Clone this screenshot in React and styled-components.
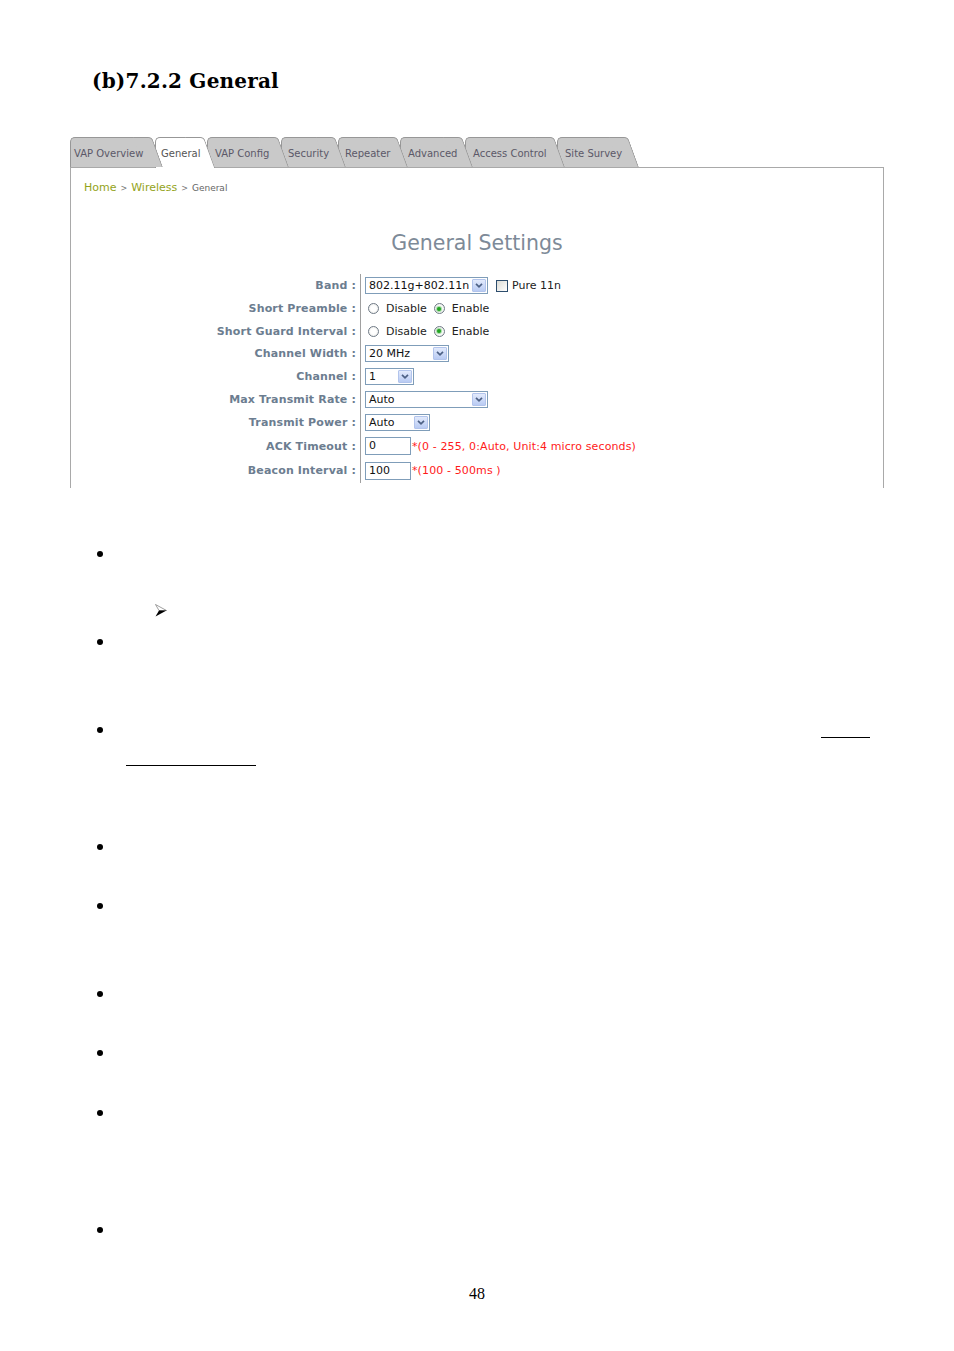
import styled, { createGlobalStyle } from "styled-components";

const GlobalStyle = createGlobalStyle`
  html, body {
    margin: 0;
    padding: 0;
    background: #ffffff;
  }
`;

// page ------------------------------------------------------------
const Page = styled.div`
  width: 954px;
  min-height: 1351px;
  box-sizing: border-box;
  padding-top: 69px;
  background: #fff;
`;

const Title = styled.h1`
  margin: 0 0 44px 92px;
  font: bold 20px/24px "DejaVu Serif", "Liberation Serif", serif;
  letter-spacing: 0.2px;
  color: #000;
`;

// tabs + panel ----------------------------------------------------
const Frame = styled.div`
  margin: 0 70px;
  font-family: "DejaVu Sans", Verdana, sans-serif;
`;

const TabBar = styled.div`
  display: flex;
  align-items: flex-start;
  height: 30px;
  position: relative;
  z-index: 2;
`;

const Tab = styled.div`
  position: relative;
  z-index: ${(p) => p.$z};
  box-sizing: border-box;
  flex: none;
  width: ${(p) => p.$w - 9}px;
  height: ${(p) => (p.$active ? 31 : 30)}px;
  margin-right: 9px;
  padding: 10px 0 0 ${(p) => p.$pad}px;
  background: ${(p) => (p.$active ? "#ffffff" : "#c9c9c9")};
  border: 1px solid #979797;
  border-right: none;
  border-bottom: none;
  border-top-left-radius: 5px;
  font-size: 10px;
  line-height: 12px;
  color: ${(p) => (p.$active ? "#555555" : "#5b5868")};
  white-space: nowrap;

  &::after {
    content: "";
    position: absolute;
    z-index: -1;
    top: -1px;
    bottom: 0;
    right: -6px;
    width: 18px;
    background: inherit;
    border-top: 1px solid #979797;
    border-right: 1px solid #979797;
    border-top-right-radius: 4px;
    transform: skewX(20deg);
    transform-origin: top left;
  }
`;

const Panel = styled.div`
  box-sizing: border-box;
  height: 321px;
  border: 1px solid #a9a9a9;
  border-bottom: none;
  padding: 13px 0 0 13px;
`;

const Crumbs = styled.div`
  display: flex;
  align-items: baseline;
  gap: 4px;
  height: 14px;
  line-height: 14px;
`;

const CrumbLink = styled.span`
  font-size: 11px;
  color: #94a31a;
`;

const CrumbSep = styled.span`
  font-size: 8px;
  color: #777;
`;

const CrumbCurrent = styled.span`
  font-size: 9px;
  color: #666;
`;

const Heading = styled.h2`
  margin: 36px 0 0 -13px;
  text-align: center;
  font-weight: normal;
  font-size: 20.5px;
  line-height: 24px;
  color: #7d8a98;
`;

// form ------------------------------------------------------------
const Form = styled.div`
  display: grid;
  grid-template-columns: 276px 1fr;
  grid-template-rows: 23px 23px 22px 23px 23px 23px 23px 24px 25px;
  margin-top: 19px;
`;

const Label = styled.div`
  display: flex;
  align-items: center;
  justify-content: flex-end;
  padding-right: 4px;
  font-size: 11px;
  font-weight: bold;
  letter-spacing: 0.15px;
  color: #6c7d90;
  white-space: nowrap;
`;

const Value = styled.div`
  display: flex;
  align-items: center;
  padding-left: 4px;
  border-left: 1px solid #a0a0a0;
  font-size: 11px;
  color: #222;
  white-space: nowrap;
`;

const Select = styled.div`
  display: flex;
  align-items: center;
  justify-content: space-between;
  box-sizing: border-box;
  width: ${(p) => p.$w}px;
  height: 17px;
  padding: 0 1px 0 3px;
  border: 1px solid #7f9db9;
  background: #fff;
  color: #111;
`;

const DropButton = styled.span`
  display: flex;
  align-items: center;
  justify-content: center;
  box-sizing: border-box;
  width: 14px;
  height: 13px;
  background: linear-gradient(#e2eafc, #b9cbf3);
  border: 1px solid #b2c4ec;
  border-radius: 1px;
`;

const TextBox = styled.div`
  box-sizing: border-box;
  width: 46px;
  height: 18px;
  padding-left: 3px;
  border: 1px solid #7f9db9;
  line-height: 16px;
  color: #111;
`;

const Hint = styled.span`
  margin-left: 1px;
  letter-spacing: 0.12px;
  color: #ff1a1a;
`;

const Options = styled.div`
  display: flex;
  align-items: center;
  gap: 7px;
  padding-left: 3px;
`;

const Option = styled.span`
  display: inline-flex;
  align-items: center;
  gap: 7px;
`;

const Radio = styled.span`
  position: relative;
  box-sizing: border-box;
  width: 11px;
  height: 11px;
  border: 1px solid #6f7a86;
  border-radius: 50%;
  background: radial-gradient(circle, #ffffff 40%, #e4e4e0 100%);

  &::after {
    content: "";
    display: ${(p) => (p.$checked ? "block" : "none")};
    position: absolute;
    left: 2.5px;
    top: 2.5px;
    width: 4px;
    height: 4px;
    border-radius: 50%;
    background: #22a322;
    box-shadow: 0 0 1px 1px #9ed89e;
  }
`;

const Check = styled.label`
  display: inline-flex;
  align-items: center;
  gap: 4px;
  margin-left: 8px;
`;

const CheckBox = styled.span`
  box-sizing: border-box;
  width: 12px;
  height: 12px;
  border: 1px solid #2d4d6d;
  background: linear-gradient(135deg, #dcdcd6, #ffffff);
`;

// bullets ---------------------------------------------------------
const Notes = styled.div`
  display: flex;
  flex-direction: column;
`;

const Bullet = styled.div`
  display: flex;
  align-items: center;
  height: 20px;
  margin-top: ${(p) => p.$gap}px;
  padding: 0 84px 0 ${(p) => p.$indent}px;
`;

const Dot = styled.span`
  width: 6px;
  height: 6px;
  border-radius: 50%;
  background: #000;
`;

const TrailingRule = styled.span`
  align-self: flex-end;
  margin: 0 0 1.5px auto;
  width: ${(p) => p.$w}px;
  border-bottom: 1.5px solid #000;
`;

const RuleLine = styled.div`
  margin: ${(p) => p.$gap}px 0 0 126px;
  width: ${(p) => p.$w}px;
  height: 0;
  border-top: 1.5px solid #000;
`;

const PageNumber = styled.div`
  margin-top: 44.5px;
  text-align: center;
  font: 16px/20px "Liberation Serif", "Times New Roman", serif;
  color: #000;
`;

// drawings --------------------------------------------------------
const Chevron = () => (
  <svg width="8" height="5" viewBox="0 0 8 5">
    <polyline points="1,0.8 4,3.8 7,0.8" fill="none" stroke="#4d6185" strokeWidth="1.7" />
  </svg>
);

const ArrowHead = () => (
  <svg width="12" height="13" viewBox="0 0 12 13">
    <path d="M0.5 0.5 L11.5 6.5 L4 6.5 Z" fill="#fff" stroke="#777" strokeWidth="0.7" />
    <path d="M4 6.5 L11.5 6.5 L0.5 12.5 Z" fill="#000" />
  </svg>
);

const Dropdown = ({ w, children }) => (
  <Select $w={w}>
    <span>{children}</span>
    <DropButton>
      <Chevron />
    </DropButton>
  </Select>
);

const tabs = [
  { label: "VAP Overview", w: 85, pad: 3 },
  { label: "General", w: 52, pad: 5, active: true },
  { label: "VAP Config", w: 74, pad: 7 },
  { label: "Security", w: 57, pad: 6 },
  { label: "Repeater", w: 62, pad: 6 },
  { label: "Advanced", w: 65, pad: 7 },
  { label: "Access Control", w: 92, pad: 7 },
  { label: "Site Survey", w: 74, pad: 7 },
];

const notes = [
  { kind: "dot", gap: 55.5 },
  { kind: "arrow", gap: 36.5 },
  { kind: "dot", gap: 11.5 },
  { kind: "dot", gap: 68, rule: 49 },
  { kind: "rule", gap: 25.5, w: 130 },
  { kind: "dot", gap: 70.5 },
  { kind: "dot", gap: 39 },
  { kind: "dot", gap: 68 },
  { kind: "dot", gap: 39 },
  { kind: "dot", gap: 40 },
  { kind: "dot", gap: 97 },
];

const RadioPair = () => (
  <Options>
    <Option>
      <Radio />
      Disable
    </Option>
    <Option>
      <Radio $checked />
      Enable
    </Option>
  </Options>
);

const App = () => {
  return (
    <Page>
      <GlobalStyle />
      <Title>(b)7.2.2 General</Title>

      <Frame>
        <TabBar>
          {tabs.map((t, i) => (
            <Tab key={t.label} $w={t.w} $pad={t.pad} $active={t.active} $z={20 - i}>
              {t.label}
            </Tab>
          ))}
        </TabBar>

        <Panel>
          <Crumbs>
            <CrumbLink>Home</CrumbLink>
            <CrumbSep>&gt;</CrumbSep>
            <CrumbLink>Wireless</CrumbLink>
            <CrumbSep>&gt;</CrumbSep>
            <CrumbCurrent>General</CrumbCurrent>
          </Crumbs>

          <Heading>General Settings</Heading>

          <Form>
            <Label>Band :</Label>
            <Value>
              <Dropdown w={123}>802.11g+802.11n</Dropdown>
              <Check>
                <CheckBox />
                Pure 11n
              </Check>
            </Value>

            <Label>Short Preamble :</Label>
            <Value>
              <RadioPair />
            </Value>

            <Label>Short Guard Interval :</Label>
            <Value>
              <RadioPair />
            </Value>

            <Label>Channel Width :</Label>
            <Value>
              <Dropdown w={84}>20 MHz</Dropdown>
            </Value>

            <Label>Channel :</Label>
            <Value>
              <Dropdown w={49}>1</Dropdown>
            </Value>

            <Label>Max Transmit Rate :</Label>
            <Value>
              <Dropdown w={123}>Auto</Dropdown>
            </Value>

            <Label>Transmit Power :</Label>
            <Value>
              <Dropdown w={65}>Auto</Dropdown>
            </Value>

            <Label>ACK Timeout :</Label>
            <Value>
              <TextBox>0</TextBox>
              <Hint>*(0 - 255, 0:Auto, Unit:4 micro seconds)</Hint>
            </Value>

            <Label>Beacon Interval :</Label>
            <Value>
              <TextBox>100</TextBox>
              <Hint>*(100 - 500ms )</Hint>
            </Value>
          </Form>
        </Panel>
      </Frame>

      <Notes>
        {notes.map((n, i) => {
          if (n.kind === "rule") return <RuleLine key={i} $gap={n.gap} $w={n.w} />;
          if (n.kind === "arrow")
            return (
              <Bullet key={i} $gap={n.gap} $indent={155}>
                <ArrowHead />
              </Bullet>
            );
          return (
            <Bullet key={i} $gap={n.gap} $indent={97}>
              <Dot />
              {n.rule && <TrailingRule $w={n.rule} />}
            </Bullet>
          );
        })}
      </Notes>

      <PageNumber>48</PageNumber>
    </Page>
  );
};

export default App;
